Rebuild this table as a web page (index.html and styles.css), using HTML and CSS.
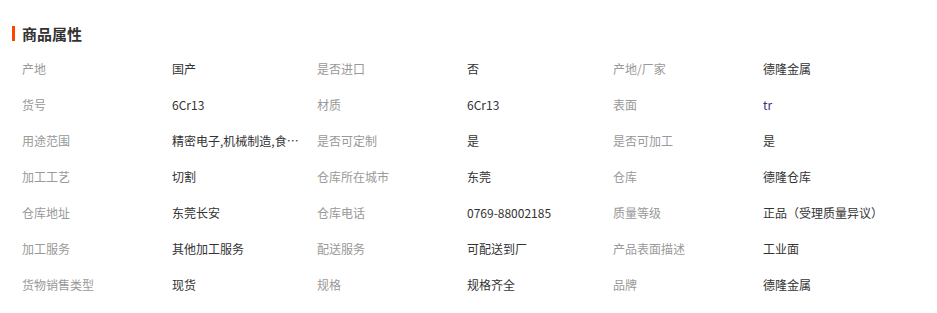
FILE: index.html
```html
<!DOCTYPE html>
<html lang="zh-CN">
<head>
<meta charset="utf-8">
<title>商品属性</title>
<link rel="stylesheet" href="styles.css">
</head>
<body>
<div class="panel">
  <h2 class="title">商品属性</h2>
  <div class="attrs">
    <span class="k">产地</span><span class="v">国产</span>
    <span class="k">是否进口</span><span class="v">否</span>
    <span class="k">产地/厂家</span><span class="v">德隆金属</span>

    <span class="k">货号</span><span class="v">6Cr13</span>
    <span class="k">材质</span><span class="v">6Cr13</span>
    <span class="k">表面</span><span class="v link">tr</span>

    <span class="k">用途范围</span><span class="v">精密电子,机械制造,食品加工,医疗器械</span>
    <span class="k">是否可定制</span><span class="v">是</span>
    <span class="k">是否可加工</span><span class="v">是</span>

    <span class="k">加工工艺</span><span class="v">切割</span>
    <span class="k">仓库所在城市</span><span class="v">东莞</span>
    <span class="k">仓库</span><span class="v">德隆仓库</span>

    <span class="k">仓库地址</span><span class="v">东莞长安</span>
    <span class="k">仓库电话</span><span class="v">0769-88002185</span>
    <span class="k">质量等级</span><span class="v">正品（受理质量异议）</span>

    <span class="k">加工服务</span><span class="v">其他加工服务</span>
    <span class="k">配送服务</span><span class="v">可配送到厂</span>
    <span class="k">产品表面描述</span><span class="v">工业面</span>

    <span class="k">货物销售类型</span><span class="v">现货</span>
    <span class="k">规格</span><span class="v">规格齐全</span>
    <span class="k">品牌</span><span class="v">德隆金属</span>
  </div>
</div>
</body>
</html>
```

FILE: styles.css
```css
html, body {
  margin: 0;
  padding: 0;
  background: #fff;
}
body {
  font-family: "Noto Sans CJK SC", "Noto Sans", sans-serif;
  font-size: 12px;
  color: #333;
}
.panel {
  padding: 26px 0 0 12px;
}
.title {
  margin: 0;
  border-left: 3px solid #ff4400;
  padding-left: 7px;
  font-size: 15px;
  line-height: 15px;
  height: 15px;
  font-weight: bold;
  color: #333;
}
.attrs {
  margin-top: 10px;
  padding-left: 10px;
  display: grid;
  grid-template-columns: 150px 145px 150px 146px 150px 1fr;
  grid-auto-rows: 36px;
  line-height: 36px;
}
.k {
  color: #999;
  white-space: nowrap;
}
.v {
  color: #333;
  max-width: 131px;
  white-space: nowrap;
  overflow: hidden;
  text-overflow: ellipsis;
}
.v.link {
  color: #40307a;
}
```
